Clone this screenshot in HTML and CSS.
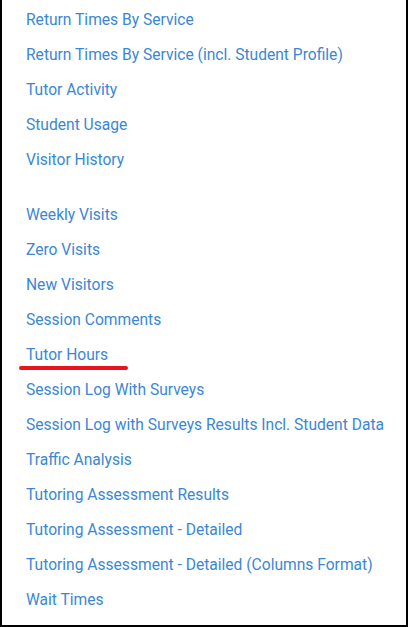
FILE: index.html
```html
<!DOCTYPE html>
<html>
<head>
<meta charset="utf-8">
<link rel="stylesheet" href="styles.css">
</head>
<body>
<div class="panel">
  <ul class="reports">
    <li><a href="#">Return Times By Service</a></li>
    <li><a href="#">Return Times By Service (incl. Student Profile)</a></li>
    <li><a href="#">Tutor Activity</a></li>
    <li><a href="#">Student Usage</a></li>
    <li><a href="#">Visitor History</a></li>
  </ul>
  <ul class="reports second">
    <li><a href="#">Weekly Visits</a></li>
    <li><a href="#">Zero Visits</a></li>
    <li><a href="#">New Visitors</a></li>
    <li><a href="#">Session Comments</a></li>
    <li class="marked"><a href="#">Tutor Hours</a></li>
    <li><a href="#">Session Log With Surveys</a></li>
    <li><a href="#">Session Log with Surveys Results Incl. Student Data</a></li>
    <li><a href="#">Traffic Analysis</a></li>
    <li><a href="#">Tutoring Assessment Results</a></li>
    <li><a href="#">Tutoring Assessment - Detailed</a></li>
    <li><a href="#">Tutoring Assessment - Detailed (Columns Format)</a></li>
    <li><a href="#">Wait Times</a></li>
  </ul>
</div>
</body>
</html>
```
FILE: styles.css
```css
html, body {
  margin: 0;
  padding: 0;
  background: #fff;
}
.panel {
  box-sizing: border-box;
  width: 408px;
  height: 627px;
  border-left: 2px solid #000;
  border-right: 2px solid #000;
  border-bottom: 2px solid #000;
  padding: 3px 0 0 24px;
  font-family: Roboto, "Liberation Sans", sans-serif;
  font-size: 15.6px;
}
.reports {
  list-style: none;
  margin: 0;
  padding: 0;
}
.reports.second {
  margin-top: 20px;
}
.reports li {
  position: relative;
  height: 35px;
  line-height: 35px;
  white-space: nowrap;
}
.reports a {
  color: #3a87d6;
  text-decoration: none;
}
.marked::after {
  content: "";
  position: absolute;
  left: -7px;
  top: 28px;
  width: 109px;
  height: 4px;
  border-radius: 2px;
  background: #e8141c;
}
```
